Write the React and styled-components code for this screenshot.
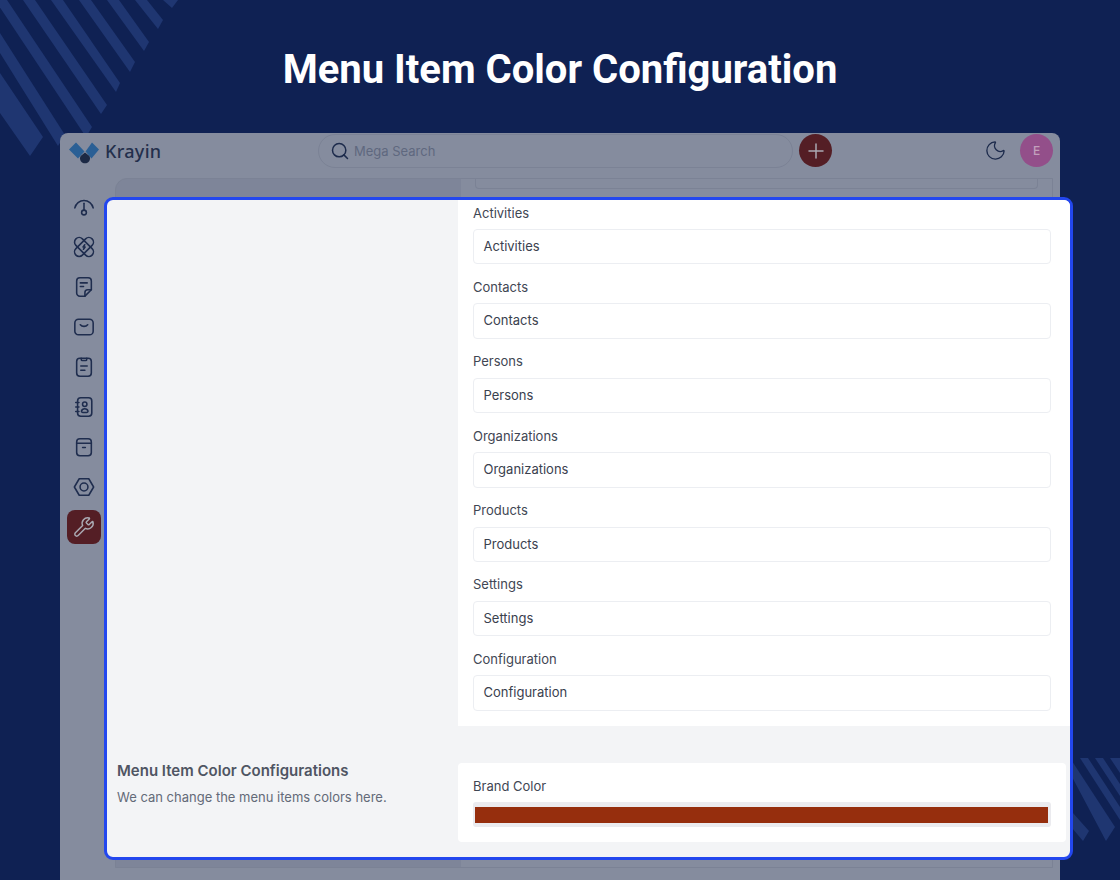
import styled, { createGlobalStyle } from 'styled-components'
import { Moon, Plus, Search, Wrench } from 'lucide-react'

const GlobalStyle = createGlobalStyle`
  * { box-sizing: border-box; }
  html, body { margin: 0; padding: 0; background: #0f2153; }
`

const Page = styled.div`
  position: relative;
  width: 1120px;
  height: 880px;
  overflow: hidden;
  background: #0f2153;
  font-family: Inter, "Liberation Sans", sans-serif;
`

const Stripes = styled.svg`
  position: absolute;
  top: 0;
  left: 0;
  width: 1120px;
  height: 880px;
  fill: #1f3671;
`

const Title = styled.h1`
  margin: 0;
  height: 133px;
  padding-top: 46px;
  position: relative;
  text-align: center;
  font-family: Roboto, sans-serif;
  font-size: 40px;
  line-height: 48px;
  font-weight: 700;
  color: #fff;
`

const Window = styled.div`
  position: relative;
  margin: 0 60px;
  height: 747px;
  overflow: hidden;
  border-radius: 8px 8px 0 0;
  background: #858c9e;
`

const TopBar = styled.header`
  display: flex;
  align-items: flex-start;
  height: 45px;
  padding: 1px 7px 0 9px;
`

const Brand = styled.div`
  display: flex;
  align-items: center;
  gap: 6px;
  width: 249px;
  height: 33px;
  font-family: "Noto Sans", sans-serif;
  font-size: 18px;
  font-weight: 500;
  letter-spacing: 0.3px;
  color: #232f4c;
`

const SearchBox = styled.div`
  display: flex;
  align-items: center;
  gap: 4px;
  width: 475px;
  height: 34px;
  padding-left: 11px;
  border: 1px solid #7b8295;
  border-radius: 17px;
  font-size: 13px;
  color: #5f687f;
  svg { color: #1d2b4c; }
`

const RoundButton = styled.div`
  display: flex;
  align-items: center;
  justify-content: center;
  width: 33px;
  height: 33px;
  margin-left: ${p => p.$gap}px;
  border-radius: 50%;
  background: ${p => p.$color};
  color: ${p => p.$ink};
  font-size: 12px;
  font-weight: 500;
`

const MoonWrap = styled.div`
  display: flex;
  margin-left: auto;
  margin-right: 13px;
  padding-top: 5px;
  color: #1d2b4c;
`

const Body = styled.div`
  display: flex;
`

const Sidebar = styled.nav`
  width: 55px;
  padding: 9px 0 0 7px;
`

const NavItem = styled.div`
  display: flex;
  align-items: center;
  justify-content: center;
  width: 34px;
  height: 40px;
  color: #1f2d4e;
`

const ActiveIcon = styled.div`
  display: flex;
  align-items: center;
  justify-content: center;
  width: 34px;
  height: 34px;
  border-radius: 8px;
  background: #541e25;
  color: #aaa9b2;
`

const Backdrop = styled.div`
  display: flex;
  width: 938px;
  height: 690px;
  border: 1px solid #7b8295;
  border-radius: 12px 0 0 0;
  background: #7e8599;
`

const BackdropRight = styled.div`
  margin-left: 345px;
  flex: 1;
  padding: 0 14px;
  background: #858c9e;
`

const BackdropInput = styled.div`
  width: 563px;
  height: 10px;
  border: 1px solid #7b8295;
  border-top: 0;
  border-radius: 0 0 4px 4px;
`

const Highlight = styled.section`
  position: absolute;
  top: 197px;
  left: 104px;
  width: 969px;
  height: 663px;
  overflow: hidden;
  display: grid;
  grid-template-columns: 351px 1fr;
  grid-template-rows: auto auto;
  align-content: start;
  row-gap: 37px;
  border: 3px solid #2347ee;
  border-radius: 9px;
  background: #f3f4f6;
`

const Info = styled.div`
  padding-left: 10px;
`

const InfoTitle = styled.h2`
  margin: -1px 0 0;
  font-size: 15px;
  line-height: 18px;
  font-weight: 600;
  color: #4f5563;
`

const InfoText = styled.p`
  margin: 9px 0 0;
  font-size: 13px;
  line-height: 17px;
  color: #636a78;
`

const MenuPanel = styled.div`
  display: flex;
  flex-direction: column;
  gap: 15.5px;
  padding: 5.5px 19px 15.2px 15px;
  background: #fff;
`

const BrandPanel = styled.div`
  margin-right: 4px;
  height: 79px;
  padding: 16px 15px 0;
  border-radius: 4px;
  background: #fff;
`

const Field = styled.div`
  display: flex;
  flex-direction: column;
  gap: 8px;
`

const Label = styled.label`
  display: block;
  font-size: 13px;
  line-height: 15.5px;
  color: #3f4653;
`

const TextBox = styled.div`
  height: 35.4px;
  padding-left: 9.5px;
  border: 1px solid #eceef2;
  border-radius: 4px;
  font-size: 13px;
  line-height: 33px;
  color: #3a414e;
`

const ColorWell = styled.div`
  width: 578px;
  height: 25px;
  margin-top: 7.5px;
  padding: 5px 3px 4px 2px;
  border-radius: 3px;
  background: #ebebef;
`

const Swatch = styled.div`
  height: 100%;
  background: ${p => p.$color};
`

const iconProps = {
  width: 22,
  height: 22,
  viewBox: '0 0 24 24',
  fill: 'none',
  stroke: 'currentColor',
  strokeWidth: 1.7,
  strokeLinecap: 'round',
  strokeLinejoin: 'round',
}

const DashboardIcon = () => (
  <svg {...iconProps}>
    <path d="M2 13a10.2 10.2 0 0 1 20 0" />
    <path d="M12 8v7.5" />
    <circle cx="12" cy="18" r="2.6" />
  </svg>
)

const LeadsIcon = () => (
  <svg {...iconProps}>
    <rect x="-0.5" y="7" width="25" height="10" rx="5" transform="rotate(45 12 12)" />
    <rect x="-0.5" y="7" width="25" height="10" rx="5" transform="rotate(-45 12 12)" />
    <path d="M12.800 9.500l-1.800 2.500h2.200l-1.800 2.500" />
  </svg>
)

const NoteIcon = () => (
  <svg {...iconProps}>
    <path d="M7.500 2h9A3.500 3.500 0 0 1 20 5.500v9.500l-7 7H7.500A3.500 3.500 0 0 1 4 18.500v-13A3.500 3.500 0 0 1 7.500 2z" />
    <path d="M20 15h-4a3 3 0 0 0-3 3v4" />
    <path d="M8 7.500h7.500M8 11.500h3.500" />
  </svg>
)

const MailIcon = () => (
  <svg {...iconProps}>
    <rect x="2" y="3.500" width="20" height="17" rx="4" />
    <path d="M8 9.500c2 2.400 6 2.400 8 0" />
  </svg>
)

const ClipboardIcon = () => (
  <svg {...iconProps}>
    <rect x="4" y="2.500" width="16" height="19.500" rx="3.500" />
    <path d="M9 2.500v1.200c0 .8.600 1.300 1.300 1.300h3.400c.7 0 1.300-.5 1.300-1.300V2.500" />
    <path d="M8.500 11h7M8.500 15.500h4.500" />
  </svg>
)

const ContactsIcon = () => (
  <svg {...iconProps}>
    <rect x="5" y="2" width="15.500" height="20" rx="3.500" />
    <path d="M3 7h3.500M3 12h3.500M3 17h3.500" />
    <circle cx="12.800" cy="9" r="2.400" />
    <path d="M10.800 18h4c1 0 1.700-.7 1.500-1.600-.4-1.500-1.900-2.400-3.500-2.400s-3.100.9-3.500 2.400c-.2.900.5 1.600 1.500 1.600z" />
  </svg>
)

const ProductsIcon = () => (
  <svg {...iconProps}>
    <rect x="4" y="3" width="16" height="18.500" rx="3.500" />
    <path d="M4 8h16M10.500 12.500h3" />
  </svg>
)

const SettingsIcon = () => (
  <svg {...iconProps}>
    <path d="M1.500 12L6.800 3h10.400L22.500 12l-5.300 9H6.800z" />
    <circle cx="12" cy="12" r="4.300" />
  </svg>
)

const LogoMark = () => (
  <svg width="30" height="26" viewBox="0 0 30 26">
    <path d="M0 11.500L7 4.500l8.500 9-6.500 7z" fill="#2a5f95" />
    <path d="M23 4.500l7 7-7.500 9-6-7z" fill="#2a5f95" />
    <path d="M16 14.500l4.400 3.500a5 5 0 1 1-8.800 0z" fill="#1c2945" />
  </svg>
)

const navIcons = [DashboardIcon, LeadsIcon, NoteIcon, MailIcon, ClipboardIcon, ContactsIcon, ProductsIcon, SettingsIcon]

const menuItems = ['Activities', 'Contacts', 'Persons', 'Organizations', 'Products', 'Settings', 'Configuration']

// x of the two edges at the top of the page, then the right and bottom corners of the cut end
const topBands = [
  [-33, -21, [65, 135], [58, 146]],
  [-5, 7, [92, 127], [86, 137]],
  [23, 35, [107, 105], [101, 114]],
  [51, 63, [120, 83], [116, 92]],
  [79, 91, [135, 62], [130, 72]],
  [107, 119, [149, 42], [144, 51]],
  [135, 147, [163, 20], [158, 29]],
  [163, 178, [178, 0], [172, 8]],
]

const App = () => {
  return (
    <>
      <GlobalStyle />
      <Page>
        <Stripes viewBox="0 0 1120 880">
          <polygon points="0,73 43,137 30,156 0,113" />
          {topBands.map(([a, b, r, f]) => (
            <polygon key={a} points={`${a},0 ${b},0 ${r[0]},${r[1]} ${f[0]},${f[1]}`} />
          ))}
          <polygon points="1110,758 1120,758 1120,773" />
          <polygon points="1095,758 1103,758 1120,784 1120,796" />
          <polygon points="1080,758 1088,758 1120,807 1120,820" />
          <polygon points="1062,758 1070,758 1115,827 1106,841" />
          <polygon points="1040,785 1048,785 1089,831 1083,841 1040,790" />
        </Stripes>
        <Title>Menu Item Color Configuration</Title>
        <Window>
          <TopBar>
            <Brand>
              <LogoMark />
              Krayin
            </Brand>
            <SearchBox>
              <Search size={20} strokeWidth={1.8} />
              Mega Search
            </SearchBox>
            <RoundButton $gap={6} $color="#541e25" $ink="#aaa9b2">
              <Plus size={24} strokeWidth={1.5} />
            </RoundButton>
            <MoonWrap>
              <Moon size={23} strokeWidth={1.4} />
            </MoonWrap>
            <RoundButton $gap={0} $color="#934f8a" $ink="#c2a0bc">E</RoundButton>
          </TopBar>
          <Body>
            <Sidebar>
              {navIcons.map((Icon, i) => (
                <NavItem key={i}>
                  <Icon />
                </NavItem>
              ))}
              <NavItem>
                <ActiveIcon>
                  <Wrench size={22} strokeWidth={1.6} />
                </ActiveIcon>
              </NavItem>
            </Sidebar>
            <Backdrop>
              <BackdropRight>
                <BackdropInput />
              </BackdropRight>
            </Backdrop>
          </Body>
        </Window>
        <Highlight>
          <div />
          <MenuPanel>
            {menuItems.map(item => (
              <Field key={item}>
                <Label>{item}</Label>
                <TextBox>{item}</TextBox>
              </Field>
            ))}
          </MenuPanel>
          <Info>
            <InfoTitle>Menu Item Color Configurations</InfoTitle>
            <InfoText>We can change the menu items colors here.</InfoText>
          </Info>
          <BrandPanel>
            <Label>Brand Color</Label>
            <ColorWell>
              <Swatch $color="#962e0d" />
            </ColorWell>
          </BrandPanel>
        </Highlight>
      </Page>
    </>
  )
}

export default App
